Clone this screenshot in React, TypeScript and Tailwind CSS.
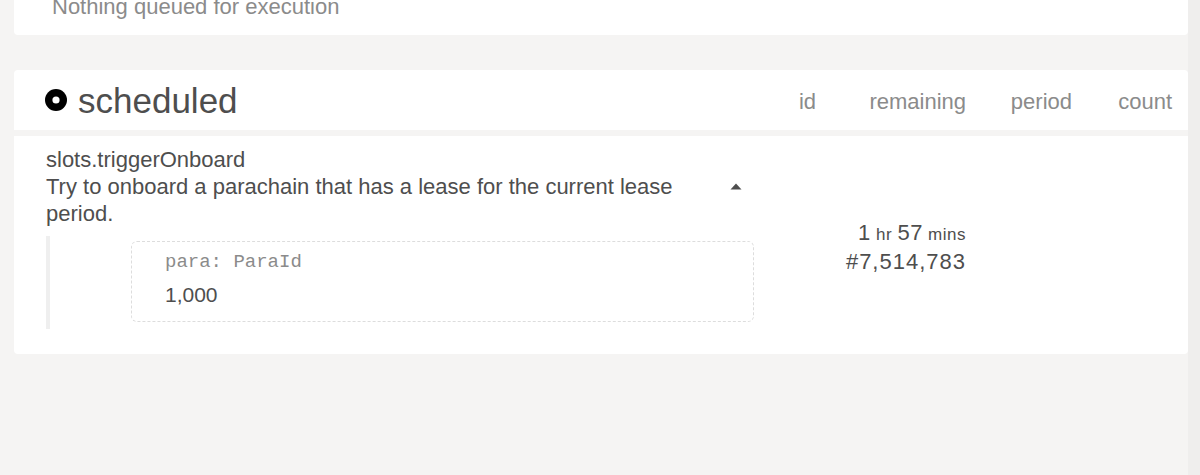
import React from 'react';

const sans = { fontFamily: '"Liberation Sans", Arial, sans-serif' };

const DotCircle = () => (
  <svg width="22" height="22" viewBox="0 0 22 22" className="shrink-0">
    <circle cx="11" cy="11" r="11" fill="#000" />
    <circle cx="11" cy="11" r="3.6" fill="#fff" />
  </svg>
);

const CaretUp = () => (
  <svg width="12" height="7" viewBox="0 0 12 7">
    <path d="M6 0.5 L11.5 6.5 L0.5 6.5 Z" fill="#4e4e4e" />
  </svg>
);

const columns = [
  { label: 'id', width: 'w-[62px]' },
  { label: 'remaining', width: 'w-[150px]' },
  { label: 'period', width: 'w-[106px]' },
  { label: 'count', width: 'w-[100px]' },
];

export default function App() {
  return (
    <div className="flex h-[475px] w-[1200px] overflow-hidden bg-[#f5f4f3]" style={sans}>
      <div className="flex-1 pl-[14px]">
        {/* queued card, scrolled past its top */}
        <div className="-mt-[27px] rounded-b-[4px] bg-white pt-[20px] pb-[15px] pl-[38px] text-[22px] leading-[27px] text-[#8b8b8b]">
          Nothing queued for execution
        </div>

        {/* scheduled table */}
        <div className="mt-[35px]">
          <div className="flex h-[60px] items-center rounded-t-[4px] bg-white pr-[16px]">
            <div className="flex flex-1 items-center gap-[11px] pl-[31px]">
              <DotCircle />
              <span className="text-[35px] leading-none text-[#4e4e4e]">scheduled</span>
            </div>
            {columns.map((c) => (
              <div key={c.label} className={`${c.width} pt-[2px] text-right text-[22px] text-[#8b8b8b]`}>
                {c.label}
              </div>
            ))}
          </div>

          <div className="mt-[6px] flex items-center rounded-b-[4px] bg-white pr-[16px] text-[#4e4e4e]">
            <div className="flex-1 pl-[32px] pt-[10px] pb-[25px]">
              <div className="text-[22px] leading-[27px]">slots.triggerOnboard</div>
              <div className="flex">
                <div className="flex-1 text-[22px] leading-[27px]">
                  Try to onboard a parachain that has a lease for the current lease period.
                </div>
                <div className="flex w-[36px] justify-center pt-[10px]">
                  <div>
                    <CaretUp />
                  </div>
                </div>
              </div>
              <div className="mt-[9px] border-l-[4px] border-[#efefef] pt-[5px] pb-[7px] pl-[81px]">
                <div className="rounded-[6px] border border-dashed border-[#dddddd] pt-[7px] pb-[11px] pl-[33px]">
                  <div
                    className="text-[19px] leading-[26px] text-[#8b8b8b]"
                    style={{ fontFamily: '"Liberation Mono", "DejaVu Sans Mono", monospace' }}
                  >
                    para: ParaId
                  </div>
                  <div className="mt-[5px] text-[21px] leading-[30px]">1,000</div>
                </div>
              </div>
            </div>
            <div className="w-[62px]" />
            <div className="w-[150px] pt-[4px] text-right leading-[27px]">
              <div className="tracking-[0.5px]">
                <span className="text-[22px]">1</span>
                <span className="text-[17px]"> hr </span>
                <span className="text-[22px]">57</span>
                <span className="text-[17px]"> mins</span>
              </div>
              <div className="text-[22px] tracking-[1px]">#7,514,783</div>
            </div>
            <div className="w-[106px]" />
            <div className="w-[100px]" />
          </div>
        </div>
      </div>
      <div className="w-[12px] bg-[#efeeed]" />
    </div>
  );
}
